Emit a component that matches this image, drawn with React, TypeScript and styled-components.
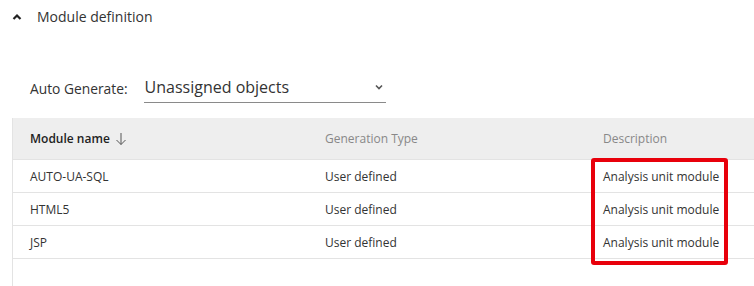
import styled, { createGlobalStyle } from 'styled-components';

const GlobalStyle = createGlobalStyle`
  html, body {
    margin: 0;
    padding: 0;
    background: #ffffff;
  }
  body {
    font-family: 'Open Sans', 'Noto Sans', sans-serif;
    color: #333333;
  }
`;

const Page = styled.div`
  width: 754px;
  height: 286px;
  overflow: hidden;
  display: flex;
  flex-direction: column;
`;

const SectionHeader = styled.div`
  height: 33px;
  display: flex;
  align-items: center;
  padding-left: 12px;
  gap: 15px;
`;

const SectionTitle = styled.span`
  font-size: 14px;
  color: #333333;
`;

const FilterRow = styled.div`
  display: flex;
  align-items: center;
  margin-top: 40px;
  padding-left: 30px;
  gap: 16px;
  height: 30px;
`;

const FilterLabel = styled.span`
  font-size: 13.8px;
  color: #333333;
`;

const Select = styled.div`
  width: 242px;
  height: 29px;
  display: flex;
  align-items: center;
  justify-content: space-between;
  border-bottom: 1px solid #8a8a8a;
  box-sizing: border-box;
  padding: 0 2px 2px 1px;
`;

const SelectValue = styled.span`
  font-size: 16px;
  color: #333333;
`;

const Table = styled.div`
  margin-top: 15px;
  margin-left: 12px;
  width: 760px;
  flex: 1;
  border-left: 1px solid #e3e3e3;
  display: flex;
  flex-direction: column;
`;

const Row = styled.div<{ $header?: boolean }>`
  display: grid;
  grid-template-columns: 295px 278px 1fr;
  align-items: center;
  flex-shrink: 0;
  height: ${({ $header }) => ($header ? '42px' : '33px')};
  background: ${({ $header }) => ($header ? '#eeeeee' : '#ffffff')};
  border-bottom: 1px solid #e3e3e3;
  box-sizing: border-box;
  padding-left: 17px;
  font-size: 12px;
`;

const HeadCell = styled.div<{ $active?: boolean }>`
  display: flex;
  align-items: center;
  gap: 5px;
  color: ${({ $active }) => ($active ? '#222222' : '#888888')};
  font-weight: ${({ $active }) => ($active ? 600 : 400)};
`;

const Cell = styled.div`
  color: #333333;
`;

const Highlight = styled.div`
  position: absolute;
  left: 591px;
  top: 158px;
  width: 137px;
  height: 107px;
  border: 4px solid #e8000b;
  border-radius: 3px;
  box-sizing: border-box;
  pointer-events: none;
`;

const Wrapper = styled.div`
  position: relative;
`;

const rows = ['AUTO-UA-SQL', 'HTML5', 'JSP'];

export default function App() {
  return (
    <Wrapper>
      <GlobalStyle />
      <Page>
        <SectionHeader>
          <svg width="10" height="8" viewBox="0 0 10 8">
            <path d="M1.5 6 L5 2.5 L8.5 6" fill="none" stroke="#222" strokeWidth="2.2" />
          </svg>
          <SectionTitle>Module definition</SectionTitle>
        </SectionHeader>

        <FilterRow>
          <FilterLabel>Auto Generate:</FilterLabel>
          <Select>
            <SelectValue>Unassigned objects</SelectValue>
            <svg width="10" height="8" viewBox="0 0 10 8">
              <path d="M2 2.5 L5 5.5 L8 2.5" fill="none" stroke="#555" strokeWidth="1.6" />
            </svg>
          </Select>
        </FilterRow>

        <Table>
          <Row $header>
            <HeadCell $active>
              Module name
              <svg width="12" height="14" viewBox="0 0 12 14">
                <path d="M6 1 V12.5 M1.5 8 L6 12.5 L10.5 8" fill="none" stroke="#555" strokeWidth="1" />
              </svg>
            </HeadCell>
            <HeadCell>Generation Type</HeadCell>
            <HeadCell>Description</HeadCell>
          </Row>
          {rows.map((name) => (
            <Row key={name}>
              <Cell>{name}</Cell>
              <Cell>User defined</Cell>
              <Cell>Analysis unit module</Cell>
            </Row>
          ))}
        </Table>
      </Page>
      <Highlight />
    </Wrapper>
  );
}
